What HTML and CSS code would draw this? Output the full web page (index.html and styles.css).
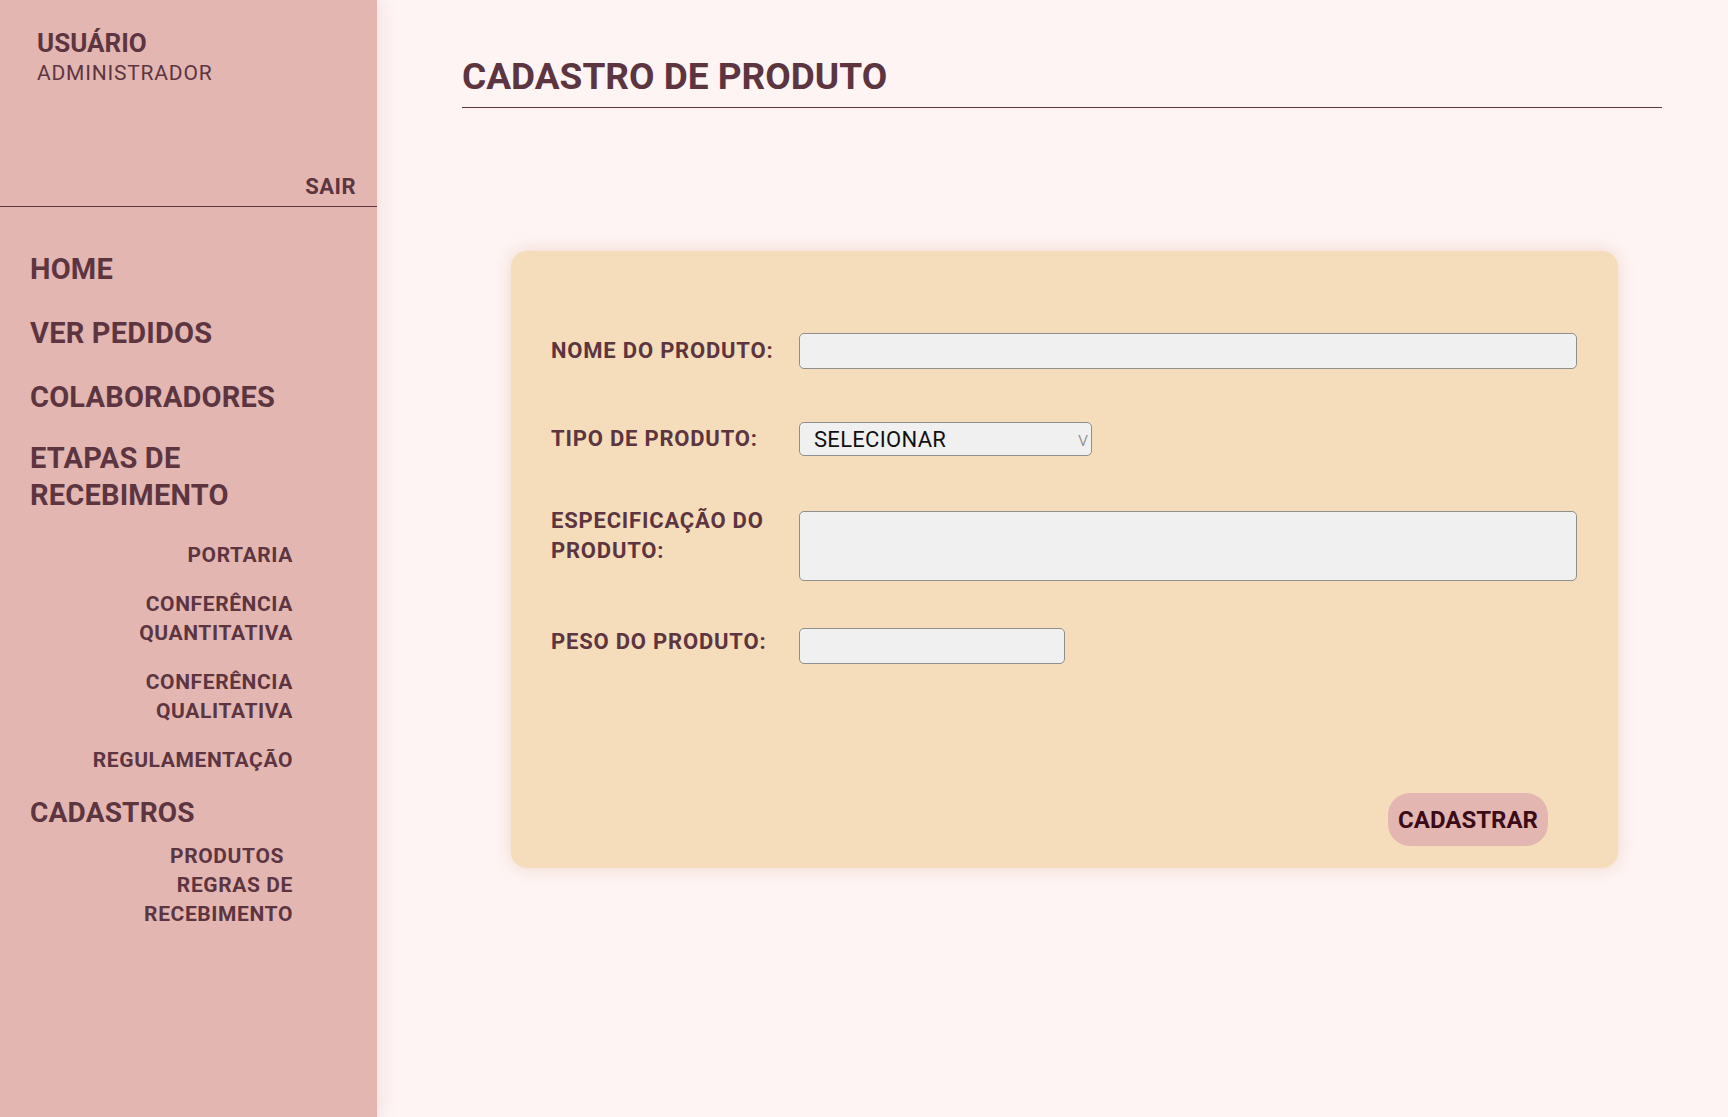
FILE: index.html
```html
<!DOCTYPE html>
<html lang="pt-BR">
<head>
<meta charset="utf-8">
<title>Cadastro de Produto</title>
<link rel="stylesheet" href="styles.css">
</head>
<body>
<aside class="sidebar">
  <div class="user-box">
    <div class="user-name">USUÁRIO</div>
    <div class="user-role">ADMINISTRADOR</div>
    <a class="logout" href="#">SAIR</a>
  </div>
  <nav class="menu">
    <a class="menu-item" href="#">HOME</a>
    <a class="menu-item" href="#">VER PEDIDOS</a>
    <a class="menu-item" href="#">COLABORADORES</a>
    <a class="menu-item menu-item-group" href="#">ETAPAS DE<br>RECEBIMENTO</a>
    <div class="submenu">
      <a class="sub-item" href="#">PORTARIA</a>
      <a class="sub-item" href="#">CONFERÊNCIA<br>QUANTITATIVA</a>
      <a class="sub-item" href="#">CONFERÊNCIA<br>QUALITATIVA</a>
      <a class="sub-item" href="#">REGULAMENTAÇÃO</a>
    </div>
    <a class="menu-item menu-item-light" href="#">CADASTROS</a>
    <div class="submenu submenu-tight">
      <a class="sub-item sub-item-pad" href="#">PRODUTOS</a>
      <a class="sub-item" href="#">REGRAS DE<br>RECEBIMENTO</a>
    </div>
  </nav>
</aside>
<main class="content">
  <h1 class="page-title">CADASTRO DE PRODUTO</h1>
  <form class="card">
    <div class="field-row row-name">
      <label class="field-label">NOME DO PRODUTO:</label>
      <input class="field-input input-wide" type="text">
    </div>
    <div class="field-row row-type">
      <label class="field-label">TIPO DE PRODUTO:</label>
      <div class="select-wrap">
        <select class="field-select">
          <option>SELECIONAR</option>
        </select>
      </div>
    </div>
    <div class="field-row row-spec">
      <label class="field-label">ESPECIFICAÇÃO DO PRODUTO:</label>
      <textarea class="field-input field-textarea"></textarea>
    </div>
    <div class="field-row row-weight">
      <label class="field-label">PESO DO PRODUTO:</label>
      <input class="field-input input-short" type="text">
    </div>
    <button class="submit-btn" type="button">CADASTRAR</button>
  </form>
</main>
</body>
</html>
```
FILE: styles.css
```css
* { box-sizing: border-box; }

html, body {
  margin: 0;
  padding: 0;
}

body {
  display: flex;
  min-height: 100vh;
  background: #fdf4f3;
  color: #5c3541;
  font-family: "Roboto", "Liberation Sans", sans-serif;
}

a { color: inherit; text-decoration: none; }

/* Sidebar */
.sidebar {
  width: 377px;
  flex-shrink: 0;
  background: #e3b6b2;
  box-shadow: 3px 0 14px rgba(220, 160, 160, 0.25);
  position: relative;
  z-index: 1;
}

.user-box {
  padding: 27px 21px 5px 37px;
  border-bottom: 1px solid #5c3541;
  display: flex;
  flex-direction: column;
}

.user-name {
  font-size: 26px;
  font-weight: 700;
  line-height: 32px;
}

.user-role {
  font-size: 21px;
  line-height: 28px;
  letter-spacing: 0.8px;
}

.logout {
  align-self: flex-end;
  margin-top: 86px;
  font-size: 22px;
  font-weight: 700;
  line-height: 28px;
  letter-spacing: 0.5px;
}

.menu {
  padding: 43px 0 40px 30px;
  display: flex;
  flex-direction: column;
  gap: 26px;
}

.menu-item {
  display: block;
  font-size: 29px;
  font-weight: 700;
  line-height: 38px;
  letter-spacing: 0.2px;
}

.menu-item-group {
  margin-top: -2px;
  line-height: 37px;
}

.menu-item-light {
  font-size: 28px;
  letter-spacing: 0.2px;
  margin-top: -7px;
}

.submenu {
  width: 263px;
  display: flex;
  flex-direction: column;
  align-items: flex-end;
  text-align: right;
  gap: 20px;
  margin-top: 1px;
}

.submenu-tight {
  gap: 0;
  margin-top: -16px;
}

.sub-item {
  display: block;
  font-size: 21px;
  font-weight: 700;
  line-height: 29px;
  letter-spacing: 0.6px;
}

.sub-item-pad { padding-right: 9px; }

/* Main */
.content {
  flex: 1;
  padding: 54px 66px 40px 85px;
}

.page-title {
  margin: 0;
  font-size: 37px;
  font-weight: 700;
  line-height: 46px;
  letter-spacing: 0;
  padding-bottom: 7px;
  border-bottom: 1px solid #5c3541;
}

.card {
  width: 1107px;
  height: 617px;
  margin: 143px 0 0 49px;
  background: #f5dcba;
  border-radius: 16px;
  box-shadow: 0 0 16px rgba(235, 195, 175, 0.6);
  padding: 82px 41px 22px 40px;
  display: flex;
  flex-direction: column;
}

.field-row {
  display: flex;
  align-items: center;
  gap: 12px;
}

.row-type { margin-top: 53px; }
.row-spec { margin-top: 55px; align-items: flex-start; }
.row-weight { margin-top: 46px; }

.field-label {
  width: 236px;
  flex-shrink: 0;
  font-size: 22px;
  font-weight: 700;
  line-height: 30px;
  letter-spacing: 0.8px;
}

.row-spec .field-label { margin-top: -5px; }
.row-weight .field-label { margin-bottom: 8px; }

.field-input {
  height: 36px;
  background: #f0f0f0;
  border: 1px solid #8e8e8e;
  border-radius: 5px;
  font-family: inherit;
  font-size: 21px;
  padding: 0 12px;
}

.input-wide { width: 778px; }
.input-short { width: 266px; }

.field-textarea {
  width: 778px;
  height: 70px;
  resize: none;
}

.select-wrap {
  position: relative;
  width: 293px;
}

.select-wrap::after {
  content: "v";
  position: absolute;
  right: 4px;
  top: 0;
  font-family: "Roboto", sans-serif;
  font-size: 21px;
  font-weight: 300;
  line-height: 34px;
  color: #8a8a8a;
  pointer-events: none;
}

.field-select {
  appearance: none;
  -webkit-appearance: none;
  width: 100%;
  height: 34px;
  background: #f0f0f0;
  border: 1px solid #8e8e8e;
  border-radius: 5px;
  font-family: inherit;
  font-size: 22px;
  letter-spacing: 0.3px;
  color: #111;
  padding: 0 0 0 14px;
}

.submit-btn {
  margin-top: auto;
  margin-right: 29px;
  align-self: flex-end;
  width: 160px;
  height: 53px;
  border: none;
  border-radius: 22px;
  background: #e3b6b2;
  color: #3b0c18;
  font-family: inherit;
  font-size: 24px;
  font-weight: 700;
  letter-spacing: 0;
  padding: 0;
}
```
